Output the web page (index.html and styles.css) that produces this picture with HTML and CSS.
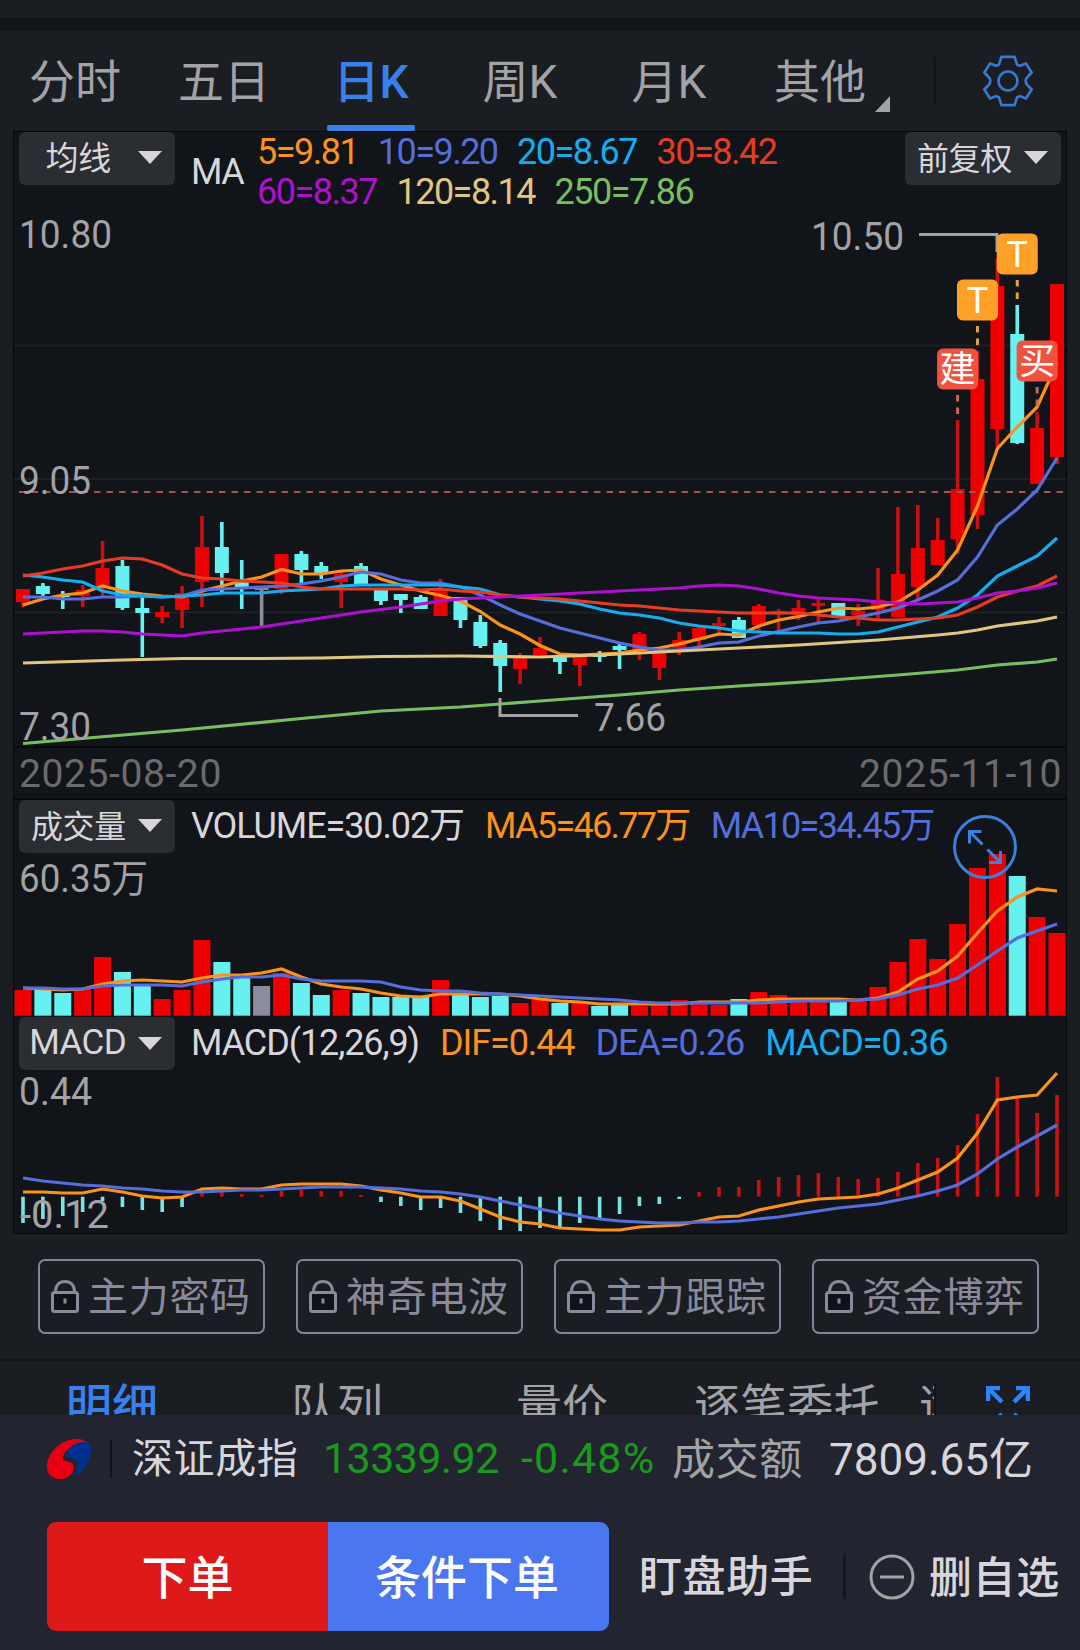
FILE: index.html
```html
<!DOCTYPE html>
<html lang="zh-CN">
	<head>
		<meta charset="utf-8" />
		<title>日K</title>
		<link rel="stylesheet" href="styles.css">
	</head>
	<body>
		<div class="page">
			<div class="band"></div>

			<nav class="period-tabs">
				<a class="tab">分时</a>
				<a class="tab">五日</a>
				<a class="tab active">日K</a>
				<a class="tab">周K</a>
				<a class="tab">月K</a>
				<a class="tab more">其他</a>
				<span class="tabs-divider"></span>
				<svg class="gear" viewBox="-27.500 -28.500 55 57">
					<path d="M-7 -25.500H7L9.500 -17.500L12.500 -16L19 -18.500L25 -9L19.500 -3Q18 0 19.500 3L25 9L19 18.500L12.500 16L9.500 17.500L7 25.500H-7L-9.500 17.500L-12.500 16L-19 18.500L-25 9L-19.500 3Q-18 0 -19.500 -3L-25 -9L-19 -18.500L-12.500 -16L-9.500 -17.500Z" />
					<circle r="10" />
				</svg>
			</nav>

			<main class="charts">
				<section class="panel price">
					<div class="panel-head">
						<button class="select">均线</button>
						<span class="legend-name">MA</span>
						<div class="ma-legend">
							<div>
								<span class="orange">5=9.81</span>
								<span class="indigo">10=9.20</span>
								<span class="sky">20=8.67</span>
								<span class="red">30=8.42</span>
							</div>
							<div>
								<span class="purple">60=8.37</span>
								<span class="sand">120=8.14</span>
								<span class="green">250=7.86</span>
							</div>
						</div>
						<button class="select right">前复权</button>
					</div>
					<svg id="price-chart" viewBox="14 208 1052 538"></svg>
				</section>

				<div class="dates">
					<span>2025-08-20</span>
					<span>2025-11-10</span>
				</div>

				<section class="panel volume">
					<div class="panel-head">
						<button class="select">成交量</button>
						<div class="legend">
							<span>VOLUME=30.02万</span>
							<span class="orange">MA5=46.77万</span>
							<span class="indigo">MA10=34.45万</span>
						</div>
					</div>
					<svg id="volume-chart" viewBox="14 853 1052 164"></svg>
					<svg class="expand" viewBox="-33 -33 66 66">
						<circle r="30.500" />
						<path d="M-2.500 -2.500L-15.500 -15.500M-15.500 -3.500V-15.500H-3.500M2.500 2.500L15.500 15.500M15.500 4V15.500H4" />
					</svg>
				</section>

				<section class="panel macd">
					<div class="panel-head">
						<button class="select">MACD</button>
						<div class="legend">
							<span>MACD(12,26,9)</span>
							<span class="orange">DIF=0.44</span>
							<span class="indigo">DEA=0.26</span>
							<span class="sky">MACD=0.36</span>
						</div>
					</div>
					<svg id="macd-chart" viewBox="14 1070 1052 163"></svg>
				</section>
			</main>

			<svg width="0" height="0" class="defs">
				<symbol id="lock" viewBox="0 0 28 33">
					<rect x="1.500" y="12.500" width="25" height="19" rx="2" fill="#0f1217" />
					<path d="M4.500 12C4.500 5 8.500 1.500 14 1.500S23.500 5 23.500 12M14 18.500V23.500" fill="none" />
				</symbol>
			</svg>
			<div class="locked-row">
				<button class="locked"><svg><use href="#lock" /></svg>主力密码</button>
				<button class="locked"><svg><use href="#lock" /></svg>神奇电波</button>
				<button class="locked"><svg><use href="#lock" /></svg>主力跟踪</button>
				<button class="locked"><svg><use href="#lock" /></svg>资金博弈</button>
			</div>

			<nav class="detail-tabs">
				<a class="detail active">明细</a>
				<a class="detail">队列</a>
				<a class="detail">量价</a>
				<a class="detail wide">逐笔委托</a>
				<a class="detail cut">逐</a>
				<svg class="full" viewBox="0 0 44 44">
					<path d="M16 16L3 3M2 15V2H14M28 16L41 3M42 15V2H30M16 28L3 41M2 29V42H14M28 28L41 41M42 29V42H30" />
				</svg>
			</nav>

			<footer>
				<div class="index-row">
					<svg class="logo" viewBox="0 0 44 42">
						<path fill="#e60012" d="M42 7C37-1 22-1 11 8C2 15-2 26 1 34C4 41 14 43 21 39C27 35 28 29 25 25C22 23 18 24 16 21C15 15 25 4 42 7Z" />
						<path fill="#00308f" d="M42 5C47 14 42 30 25 40C30 34 33 26 29 22C26 19 21 21 19 17C19 10 31 1 42 5Z" />
					</svg>
					<span class="index-name">深证成指</span>
					<span class="index-value">13339.92</span>
					<span class="index-change">-0.48%</span>
					<span class="turnover-label">成交额</span>
					<span class="turnover">7809.65亿</span>
				</div>
				<div class="action-row">
					<button class="order">下单</button>
					<button class="order cond">条件下单</button>
					<span class="assistant">盯盘助手</span>
					<svg class="minus" viewBox="0 0 46 46">
						<circle cx="23" cy="23" r="21" />
						<path d="M11 23H35" />
					</svg>
					<span class="remove">删自选</span>
				</div>
			</footer>
		</div>

		<script src="charts.js"></script>
	</body>
</html>
```
FILE: styles.css
```css
* {
	margin: 0;
	padding: 0;
	box-sizing: border-box;
}

body {
	background: #1a1d22;
	color: #d8d6da;
	font-family: Roboto, "Noto Sans CJK SC", sans-serif;
	width: 1080px;
	height: 1650px;
	overflow: hidden;
}

button {
	border: none;
	font-family: inherit;
	color: inherit;
}

.page {
	height: 1650px;
	display: flex;
	flex-direction: column;
}

.band {
	height: 13px;
	margin-top: 18px;
	background: #111418;
}

/* period tabs */
.period-tabs {
	height: 100px;
	display: flex;
	padding-left: 29px;
	font-size: 46px;
	color: #a3a2a8;
}

.tab {
	position: relative;
	line-height: 103px;
	width: 88px;
	margin-right: 61px;
	text-align: center;
	white-space: nowrap;
}

.tab.active {
	color: #3a80ea;
	font-weight: 500;
}

.tab.active::after {
	content: "";
	position: absolute;
	left: 0;
	bottom: 0;
	width: 88px;
	height: 6px;
	border-radius: 2px;
	background: #3a80ea;
}

.tab.more {
	margin-right: 0;
	width: 94px;
	text-align: left;
}

.tab.more::after {
	content: "";
	position: absolute;
	right: -22px;
	bottom: 19px;
	border-left: 15px solid transparent;
	border-bottom: 16px solid #a3a2a8;
}

.tabs-divider {
	width: 2px;
	height: 48px;
	margin: 26px 46px 0 auto;
	background: #111418;
}

.gear {
	width: 52px;
	height: 54px;
	margin: 23px 46px 0 0;
	fill: none;
	stroke: #3a78d4;
	stroke-width: 2.8;
	stroke-linejoin: round;
}

/* chart panels */
.charts {
	width: 1054px;
	margin-left: 13px;
	background: #111418;
	border: 1px solid #050608;
}

.panel {
	position: relative;
}

.panel > svg {
	display: block;
	overflow: visible;
}

#price-chart {
	width: 1052px;
	height: 538px;
}

#volume-chart {
	width: 1052px;
	height: 164px;
}

#macd-chart {
	width: 1052px;
	height: 163px;
}

.panel-head {
	display: flex;
	align-items: flex-start;
	height: 53px;
	padding: 0 5px;
	font-size: 36px;
	letter-spacing: -1.1px;
}

.price .panel-head {
	height: 76px;
}

.select {
	flex: none;
	display: flex;
	align-items: center;
	justify-content: flex-end;
	width: 156px;
	height: 53px;
	padding: 0 13px 5px 0;
	border-radius: 6px;
	background: #2a2d31;
	font-size: 32px;
	letter-spacing: -0.3px;
	white-space: nowrap;
}

.select::after {
	content: "";
	margin: 3px 0 0 12px;
	border: 12px solid transparent;
	border-top: 13px solid #d8d6da;
	border-bottom: none;
}

.price .select:first-child {
	font-size: 33px;
}

.price .select:first-child::after {
	margin-left: 27px;
}

.macd .select {
	padding-bottom: 2px;
	font-size: 35px;
	letter-spacing: -0.6px;
}

.macd .select::after {
	margin-top: 1px;
}

.select.right {
	margin-left: auto;
}

.legend-name {
	margin: 19px 0 0 16px;
	letter-spacing: -1.5px;
	width: 66px;
}

.ma-legend {
	letter-spacing: -1.5px;
}

.ma-legend div {
	display: flex;
	gap: 19.5px;
	line-height: 40px;
}

.legend {
	display: flex;
	gap: 21px;
	margin-left: 16px;
	line-height: 52px;
}

.volume .orange,
.volume .indigo {
	letter-spacing: -1.7px;
}

.orange { color: #fa921c; }
.indigo { color: #566edb; }
.sky { color: #14aef0; }
.red { color: #e83c22; }
.purple { color: #ae10d0; }
.sand { color: #e0c67e; }
.green { color: #78be60; }

.dates {
	display: flex;
	justify-content: space-between;
	height: 54px;
	padding: 0 4px 0 5px;
	border-top: 2px solid #07090b;
	border-bottom: 2px solid #07090b;
	font-size: 39px;
	line-height: 53px;
	letter-spacing: 0.6px;
	color: #6b6a6d;
}

.expand {
	position: absolute;
	top: 14px;
	left: 938px;
	width: 66px;
	height: 66px;
	fill: none;
	stroke: #3b80dc;
	stroke-width: 3;
}

.axis {
	font-size: 39px;
	fill: #a3a2a5;
}

.pin {
	fill: #fff;
	font-size: 36px;
	text-anchor: middle;
}

/* locked indicators */
.defs {
	position: absolute;
}

.locked-row {
	display: flex;
	gap: 31px;
	padding: 25px 0 0 38px;
	height: 125px;
}

.locked {
	display: flex;
	align-items: center;
	width: 227px;
	height: 75px;
	padding: 0 0 5px 11px;
	border: 2px solid #82849a;
	border-radius: 7px;
	background: none;
	color: #8b8a9c;
	font-size: 40px;
	letter-spacing: 0.7px;
	white-space: nowrap;
}

.locked svg {
	flex: none;
	width: 28px;
	height: 33px;
	margin: 5px 9px 0 0;
	stroke: #8b8a9c;
	stroke-width: 3;
}

.detail-tabs {
	flex: none;
	display: flex;
	height: 56px;
	overflow: hidden;
	border-top: 2px solid #111418;
	font-size: 46px;
	line-height: 46px;
	color: #a3a2a8;
	padding: 22px 0 0 66px;
}

.detail {
	width: 225px;
	white-space: nowrap;
}

.detail.active {
	color: #3a80ea;
	font-weight: 500;
}

.detail:nth-child(3) {
	width: 178px;
}

.detail.wide {
	width: 225px;
	letter-spacing: 0.6px;
}

.detail.cut {
	width: 17px;
	overflow: hidden;
	border-right: 2px solid #111418;
}

.full {
	width: 44px;
	height: 44px;
	margin: 3px 0 0 50px;
	flex: none;
	fill: none;
	stroke: #2f85f5;
	stroke-width: 4.5;
}

/* bottom bar */
footer {
	flex: 1;
	background: #222530;
}

.index-row {
	display: flex;
	align-items: center;
	height: 88px;
	padding-left: 47px;
	font-size: 41px;
	white-space: nowrap;
}

.logo {
	width: 44px;
	height: 42px;
}

.index-name {
	margin-left: 19px;
	padding-left: 20px;
	border-left: 2px solid #111418;
	line-height: 38px;
	width: 213px;
	letter-spacing: 0.6px;
}

.index-value,
.index-change {
	font-size: 43px;
	padding-bottom: 2px;
	color: #189a1c;
}

.index-value {
	width: 198px;
	letter-spacing: -0.6px;
}

.index-change {
	width: 151px;
	letter-spacing: 1.2px;
}

.turnover-label {
	width: 157px;
	padding-bottom: 7px;
	font-size: 43px;
	letter-spacing: 0.6px;
	color: #a3a2a5;
}

.turnover {
	padding-bottom: 7px;
	font-size: 44px;
}

.action-row {
	display: flex;
	align-items: center;
	height: 109px;
	margin-top: 19px;
	padding-left: 47px;
	font-size: 43px;
	font-weight: 500;
	white-space: nowrap;
}

.order {
	width: 281px;
	height: 109px;
	padding-bottom: 5px;
	border-radius: 9px 0 0 9px;
	background: #dd1919;
	color: #fff;
	font-size: 46px;
	font-weight: 500;
}

.order.cond {
	padding-right: 3px;
	border-radius: 0 9px 9px 0;
	background: #4a76f0;
}

.assistant {
	width: 237px;
	margin-right: 23px;
	padding-left: 30px;
	border-right: 3px solid #14171c;
	line-height: 44px;
	letter-spacing: 0.6px;
}

.minus {
	width: 46px;
	height: 46px;
	margin-right: 14px;
	fill: none;
	stroke: #a3a2a5;
	stroke-width: 3;
}

.remove {
	padding-bottom: 5px;
	letter-spacing: 0.6px;
}
```
FILE: charts.js
```js
const STEP = 19.885;
const X0 = 23;
const RED = "#ee0000";
const WICK = "#c81010";
const CYAN = "#66f0f0";
const GREY = "#8d8b9e";

const x = (i) => X0 + i * STEP;

// r = rise, f = fall, n = unchanged
const KIND = "rffrrffrrrffnrffrffffrfffrrfrffrrrrrfrrrrfrrrrrrrrfrr";

const color = (i) => ({ r: RED, f: CYAN, n: GREY })[KIND[i]];
const wick = (i) => ({ r: WICK, f: CYAN, n: GREY })[KIND[i]];

// high, body top, body bottom, low
const candles = [
	[589, 589, 602, 607], [583, 586, 594, 597], [591, 595, 597, 609],
	[585, 590, 596, 607], [541, 568, 586, 598], [560, 566, 608, 610],
	[597, 608, 613, 657], [606, 612, 617, 623], [586, 593, 610, 628],
	[516, 547, 582, 607], [522, 547, 573, 592], [560, 582, 588, 609],
	[587, 588, 590, 626], [554, 554, 589, 594], [551, 554, 570, 583],
	[562, 566, 573, 579], [570, 574, 582, 608], [563, 566, 585, 586],
	[588, 590, 601, 605], [594, 594, 600, 613], [595, 597, 609, 609],
	[579, 588, 616, 616], [597, 597, 620, 628], [615, 622, 646, 648],
	[640, 643, 666, 692], [653, 656, 669, 684], [637, 648, 655, 655],
	[654, 655, 662, 674], [654, 656, 665, 686], [651, 655, 657, 662],
	[644, 646, 650, 669], [632, 634, 651, 660], [651, 653, 668, 680],
	[632, 640, 648, 655], [627, 628, 640, 650], [617, 623, 626, 634],
	[617, 620, 638, 638], [604, 606, 625, 631], [609, 611, 613, 631],
	[600, 608, 615, 620], [599, 603, 606, 622], [603, 603, 616, 617],
	[604, 611, 615, 626], [568, 600, 610, 619], [507, 574, 617, 617],
	[505, 548, 587, 600], [518, 540, 565, 565], [420, 489, 539, 554],
	[351, 379, 515, 529], [258, 286, 429, 447], [305, 334, 443, 444],
	[412, 428, 484, 484], [284, 284, 457, 464],
];

const ma5 = [605, 599, 595, 593, 586, 591, 594, 596, 597, 591, 586, 581, 577, 569.5, 574, 574, 571, 570, 579, 585, 591, 595.5, 601, 611.5, 625, 634, 645.5, 654, 655, 654, 653, 650, 648, 644, 639, 634, 635, 626, 620, 616.5, 612, 608, 609, 607, 602, 590, 575, 550, 506, 448.5, 427, 407, 363];
const ma10 = [597, 597, 599, 599, 597, 597, 596, 597, 596, 590, 589, 588, 587, 586, 584, 581, 577, 572, 574, 580, 583, 583, 587, 595, 605, 614, 621, 628, 633, 638, 643, 647, 650, 650, 647, 643, 642, 636, 631.5, 627, 623, 621, 617, 613, 608, 600, 591, 580, 557, 525, 509, 490, 458];
const ma20 = [575, 577, 580, 582, 591, 595, 596, 597, 596, 595, 593, 593, 593, 591, 590, 589, 586, 585, 585, 585, 585, 585, 587, 589, 595, 597, 599, 601, 604, 609, 613, 615, 618, 623, 626, 628, 631, 632, 633, 633, 633, 634, 634, 632, 627, 622, 617, 608, 595, 576, 566, 556, 538];
const ma30 = [576, 573, 569, 566, 561, 558, 559, 565, 574, 578, 579, 581, 582, 583, 587, 589, 589, 589, 589, 589, 590, 589, 591, 592, 595, 597, 598, 599, 601, 603, 605, 606, 608, 610, 611, 612, 613, 613, 613, 613, 615, 617, 618, 620, 620, 619, 618, 615, 607, 597, 591, 586, 576];
const ma60 = [634, 633, 632, 631, 631, 632, 634, 635, 636, 633, 631, 629, 627, 624, 621, 618, 615, 612, 609.5, 607, 604, 601, 599, 598, 597, 596, 595, 594, 593, 592, 591, 590, 589, 588, 586, 585, 586, 589, 593, 596, 598, 599, 600, 602, 603, 604, 603, 602, 598, 593, 591, 588, 583];
const ma120 = [[0, 663], [5, 660], [8, 658.5], [12, 658.5], [15, 658], [18, 656.5], [22, 656], [26, 657], [29, 655], [32, 652], [35, 649], [39, 645], [43, 640], [46, 635], [47, 633], [48, 630], [49, 626], [51, 621], [52, 617]];
const ma250 = [[0, 743.5], [8, 730], [14, 718.5], [18, 711], [22, 707], [26, 701], [30, 695], [33, 690], [36, 686], [40, 681], [44, 675], [47, 670], [49, 665], [51, 662], [52, 659]];

// bar tops and lines of the volume pane
const vol = [990, 989, 993, 988, 957, 972, 984, 999, 990, 940, 962, 978, 986, 973, 983, 995, 990, 993, 997, 997, 996, 980, 994, 997, 996, 1003, 1000, 1003, 1002, 1006, 1005, 1006, 1005, 1000, 1003, 1005, 999, 992, 995, 1000, 1001, 1002, 1001, 987, 962, 939, 959, 924, 868, 854, 876, 917, 933];
const volMa5 = [988, 989, 990, 989, 984, 981, 980, 981, 982, 978, 975, 975, 973, 969, 977, 984, 987, 989, 993, 996, 997, 994, 994, 994, 994, 996, 999, 1001, 1002, 1004, 1004, 1004, 1004, 1004, 1002, 1002, 1002, 1000, 999, 999, 999, 999, 1000, 998, 992, 979, 971, 956, 933, 911, 897, 889, 891];
const volMa10 = [988, 988, 989, 989, 986, 985, 985, 985, 986, 982, 979, 977, 977, 975, 979, 981, 981, 981, 982, 987, 990, 991, 991, 993, 994, 995, 996, 997, 998, 999, 1000, 1002, 1003, 1003, 1003, 1003, 1003, 1003, 1002, 1001, 1001, 1001, 1000, 999, 995, 989, 985, 978, 965, 951, 938, 931, 924];

// macd columns, start from the zero line
const ZERO = 1196.7;
const macd = [1223, 1219, 1216, 1212, 1201, 1207, 1210, 1212, 1207, 1193, 1192, 1194, 1195, 1191, 1190, 1191, 1191, 1195, 1202, 1206, 1210, 1208, 1213, 1221, 1230, 1231, 1228, 1227, 1223, 1218, 1214, 1206, 1204, 1199, 1192, 1187, 1187, 1180, 1177, 1175, 1173, 1177, 1179, 1178, 1172, 1163, 1158, 1145, 1114, 1077, 1097, 1113, 1095];
const dif = [1192, 1192, 1193, 1193, 1189, 1192, 1196, 1198, 1197, 1189, 1188, 1189, 1189, 1185, 1184, 1184, 1184, 1186, 1190, 1193, 1197, 1197, 1201, 1209, 1217, 1222, 1224, 1228, 1229, 1230, 1230, 1227, 1226, 1225, 1221, 1217, 1216, 1210, 1206, 1202, 1199, 1198, 1197, 1194, 1188, 1180, 1172, 1158, 1133, 1100, 1097, 1095, 1073];
const dea = [1178, 1181, 1183, 1185, 1186, 1188, 1189, 1191, 1192, 1192, 1191, 1190, 1190, 1189, 1188, 1187, 1187, 1187, 1188, 1189, 1191, 1192, 1194, 1197, 1201, 1205, 1209, 1213, 1216, 1219, 1221, 1222, 1223, 1223, 1222, 1222, 1221, 1219, 1217, 1214, 1211, 1208, 1206, 1204, 1200, 1196, 1191, 1185, 1174, 1159, 1147, 1136, 1125];

function rect(cx, top, w, bottom, fill) {
	return `<rect x="${cx - w / 2}" y="${top}" width="${w}" height="${Math.max(bottom - top, 2)}" fill="${fill}"/>`;
}

function line(data, stroke) {
	const pts = data
		.map((d, i) => (Array.isArray(d) ? `${x(d[0])},${d[1]}` : `${x(i)},${d}`))
		.join(" ");
	return `<polyline points="${pts}" fill="none" stroke="${stroke}" stroke-width="3.2"/>`;
}

function label(text, lx, ly, width) {
	return `<text class="axis" x="${lx}" y="${ly}" textLength="${width}" lengthAdjust="spacingAndGlyphs">${text}</text>`;
}

function pin(text, i, top, fill, stem) {
	const cx = x(i);
	return `<path d="M${cx} ${top + 46.5}v6.5m0 6v6.5" stroke="${stem}" stroke-width="3"/>` +
		`<rect x="${cx - 20.5}" y="${top}" width="41" height="41" rx="6" fill="${fill}"/>` +
		`<text class="pin" x="${cx}" y="${top + 33.5}">${text}</text>`;
}

let price = "";
[345.5, 479, 612.5].forEach((y) => {
	price += `<path d="M14 ${y}H1066" stroke="#1d2024" stroke-width="2"/>`;
});
candles.forEach(([high, top, bottom, low], i) => {
	price += rect(x(i), high, 3.6, low, wick(i)) + rect(x(i), top, 14, bottom, color(i));
});
price += `<path d="M19 492H1064" stroke="#a8544e" stroke-width="2" stroke-dasharray="6.5 6"/>`;
price += line(ma5, "#fa921c") + line(ma10, "#566edb") + line(ma20, "#14aef0") +
	line(ma30, "#e83c22") + line(ma60, "#ae10d0") + line(ma120, "#e0c67e") +
	line(ma250, "#78be60");
price += `<path d="M919 234.5H997V252M500 698V715.5H578" fill="none" stroke="#a3a2a5" stroke-width="3"/>`;
price += pin("T", 48, 279.5, "#ffa029", "#e0a050") + pin("T", 50, 233.5, "#ffa029", "#e0a050") +
	pin("建", 47, 348.5, "#f05240", "#cc6458") + pin("买", 51, 340.5, "#f05240", "#cc6458");
price += label("10.80", 19, 248, 93) + label("9.05", 19, 494, 72) +
	label("7.30", 19, 740, 72) + label("10.50", 811, 250, 93) + label("7.66", 594, 731, 72);
document.getElementById("price-chart").innerHTML = price;

let volume = "";
vol.forEach((top, i) => {
	volume += rect(x(i), top, 17, 1015.7, color(i));
});
volume += line(volMa5, "#fa921c") + line(volMa10, "#566edb") + label("60.35万", 19, 892, 129);
document.getElementById("volume-chart").innerHTML = volume;

let columns = "";
macd.forEach((end, i) => {
	const fill = end < ZERO ? WICK : "#78e4e6";
	columns += rect(x(i), Math.min(end, ZERO), 3.6, Math.max(end, ZERO), fill);
});
columns += line(dif, "#fa921c") + line(dea, "#566edb") +
	label("0.44", 19, 1105, 73) + label("-0.12", 20, 1228, 89);
document.getElementById("macd-chart").innerHTML = columns;
```
